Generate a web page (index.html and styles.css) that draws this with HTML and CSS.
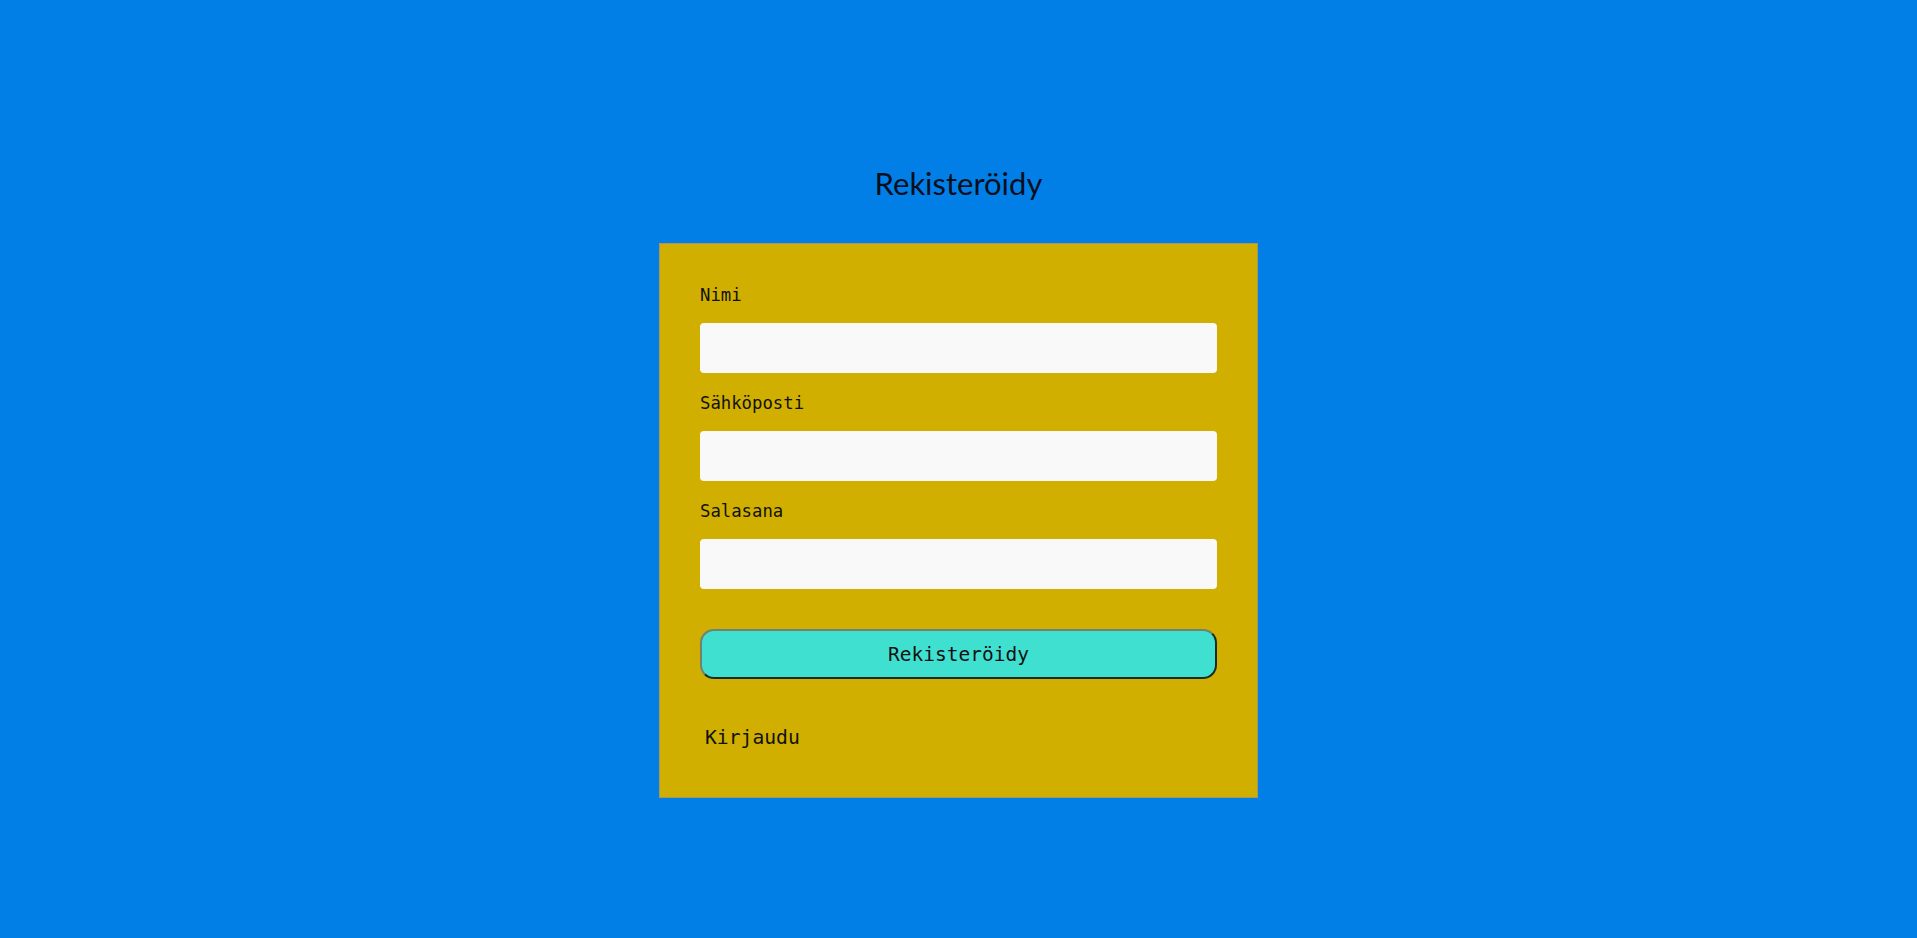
FILE: index.html
```html
<!DOCTYPE html>
<html lang="fi">
<head>
<meta charset="utf-8">
<title>Rekisteröidy</title>
<link rel="stylesheet" href="styles.css">
</head>
<body>
<main class="page">
  <h1 class="title">Rekisteröidy</h1>
  <form class="card">
    <div class="field">
      <label class="label" for="nimi">Nimi</label>
      <input class="input" id="nimi" type="text">
    </div>
    <div class="field">
      <label class="label" for="email">Sähköposti</label>
      <input class="input" id="email" type="email">
    </div>
    <div class="field">
      <label class="label" for="pw">Salasana</label>
      <input class="input" id="pw" type="password">
    </div>
    <button class="submit" type="button">Rekisteröidy</button>
    <a class="link">Kirjaudu</a>
  </form>
</main>
</body>
</html>
```
FILE: styles.css
```css
html, body {
  margin: 0;
  padding: 0;
}
body {
  background: #017fe7;
  min-height: 100vh;
  font-family: "DejaVu Sans Mono", "Liberation Mono", monospace;
  color: #111;
}
.page {
  display: flex;
  flex-direction: column;
  align-items: center;
  padding-top: 162px;
}
.title {
  margin: 0 0 39px;
  font-family: Lato, "Noto Sans", sans-serif;
  font-weight: 400;
  font-size: 31px;
  line-height: 42px;
  color: #0a0f1e;
}
.card {
  box-sizing: border-box;
  width: 599px;
  background: #d0af00;
  border: 1px solid #a59a55;
  padding: 41px 40px 47px 40px;
  display: flex;
  flex-direction: column;
}
.field {
  display: flex;
  flex-direction: column;
  margin-bottom: 20px;
}
.label {
  font-size: 17.3px;
  line-height: 20px;
  margin-bottom: 18px;
  color: #111;
}
.input {
  box-sizing: border-box;
  height: 50px;
  border: none;
  border-radius: 4px;
  background: #f9f9f9;
  width: 100%;
}
.submit {
  box-sizing: border-box;
  margin-top: 20px;
  height: 50px;
  width: 100%;
  background: #40e0d0;
  border: 2px solid;
  border-color: #6f8372 #1e2b22 #1e2b22 #6f8372;
  border-radius: 14px;
  font-family: "DejaVu Sans Mono", "Liberation Mono", monospace;
  font-size: 19.5px;
  color: #111;
}
.link {
  margin-top: 47px;
  padding-left: 5px;
  font-size: 19.7px;
  line-height: 24px;
  color: #111;
}
```
